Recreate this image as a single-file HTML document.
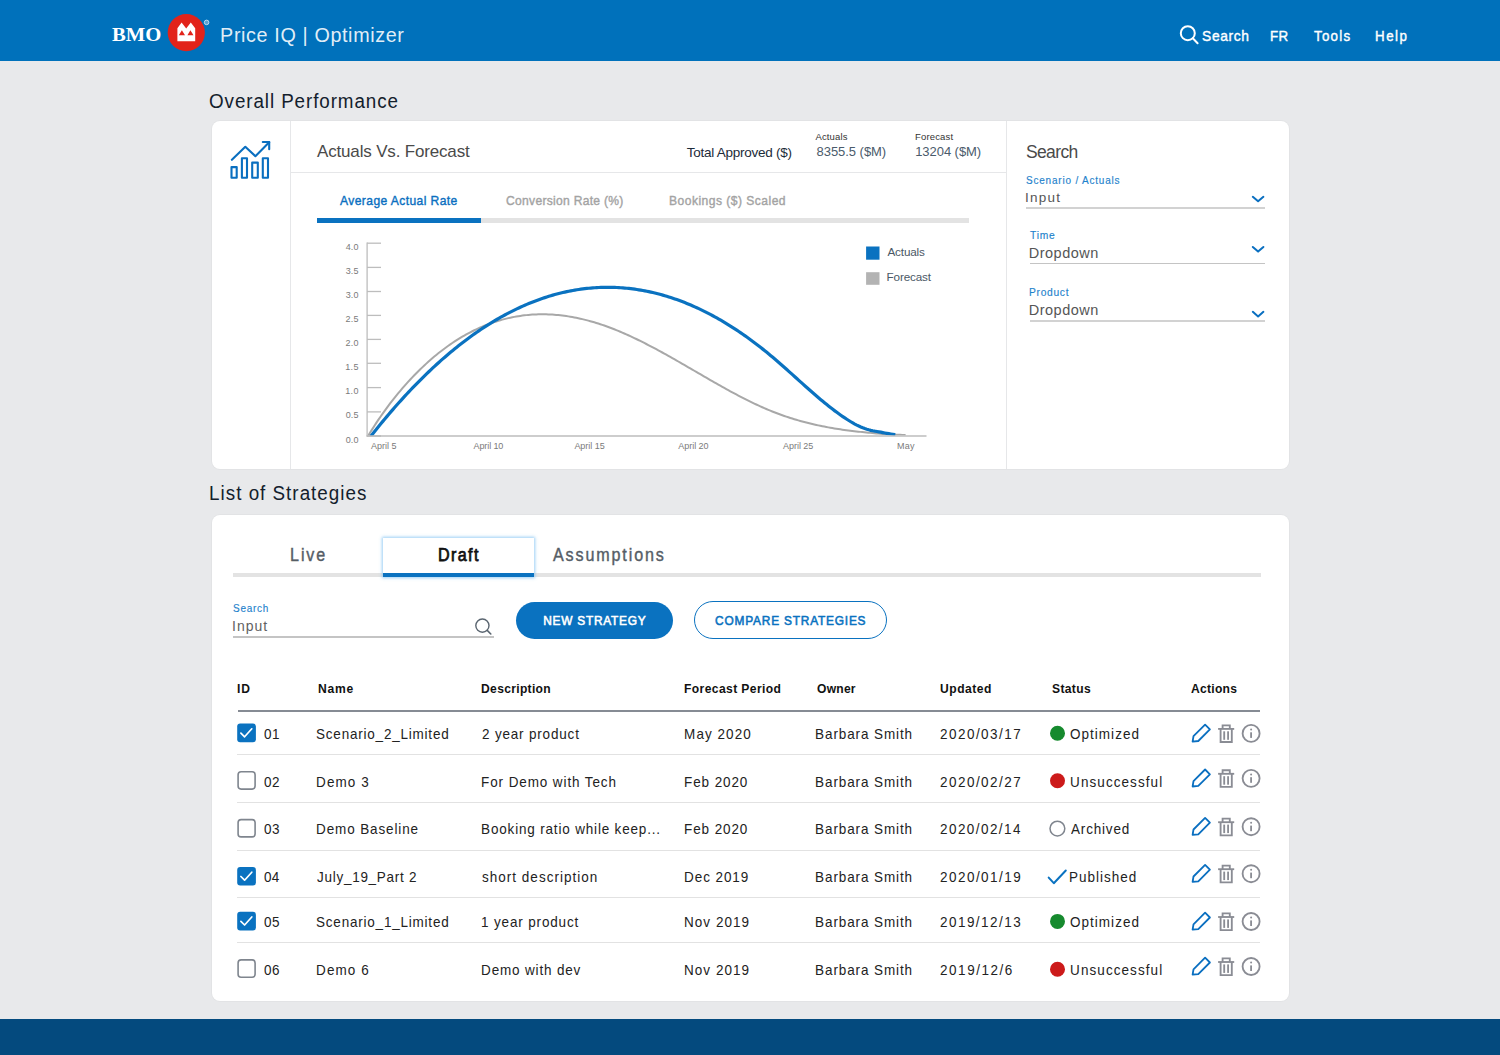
<!DOCTYPE html>
<html><head><meta charset="utf-8"><title>Price IQ | Optimizer</title>
<style>
html,body{margin:0;padding:0;}
body{width:1500px;height:1055px;overflow:hidden;position:relative;background:#E8E9EB;font-family:"Liberation Sans",sans-serif;}
.t{position:absolute;white-space:nowrap;}
.card{position:absolute;background:#fff;border-radius:8px;box-shadow:0 0 0 1px rgba(0,0,0,0.025);}
svg{overflow:visible}
</style></head><body>
<div style="position:absolute;left:0;top:0;width:1500px;height:61px;background:#0071BB"></div>
<svg style="position:absolute;left:0;top:0" width="260" height="61" viewBox="0 0 260 61">
<circle cx="186.3" cy="32.6" r="18.6" fill="#E2231A"/>
<path d="M177.4 41.2 V28.2 L181.6 22.6 L186.2 28.4 L190.8 22.6 L195.2 28.2 V41.2 Z" fill="#fff"/>
<path d="M178.8 35.2 L181.9 30.2 L185 35.2 Z M187.4 35.2 L190.4 30.2 L193.5 35.2 Z" fill="#E2231A"/>
<circle cx="206.6" cy="22.4" r="2.3" fill="rgba(255,255,255,0.35)" stroke="#dbe9f5" stroke-width="0.8"/>
</svg>
<svg style="position:absolute;left:1170px;top:15px" width="40" height="40" viewBox="1170 15 40 40">
<circle cx="1187.8" cy="33.2" r="7" fill="none" stroke="#fff" stroke-width="2"/>
<line x1="1192.8" y1="38.3" x2="1197.6" y2="43.2" stroke="#fff" stroke-width="2" stroke-linecap="round"/>
</svg>
<div style="position:absolute;left:0;top:1018.6px;width:1500px;height:40px;background:#044A7E"></div>
<div class="card" style="left:211.5px;top:121px;width:1077px;height:347.5px"></div>
<div style="position:absolute;left:290px;top:121px;width:1px;height:348px;background:#E6E7E9"></div>
<div style="position:absolute;left:1006px;top:121px;width:1px;height:348px;background:#E6E7E9"></div>
<div style="position:absolute;left:291px;top:172px;width:715px;height:1px;background:#E6E7E9"></div>
<svg style="position:absolute;left:220px;top:130px" width="60" height="60" viewBox="220 130 60 60">
<g fill="none" stroke="#0A6FC0" stroke-width="2.1" stroke-linejoin="round" stroke-linecap="round">
<rect x="231.5" y="167.1" width="5.2" height="10.7"/>
<rect x="241.9" y="158.2" width="5.1" height="19.6"/>
<rect x="252.2" y="162.6" width="5.6" height="15.2"/>
<rect x="262.8" y="158.2" width="5.2" height="19.6"/>
<polyline points="231.9,159.8 245.3,146.8 255.4,156.2 269.2,142.2"/>
<polyline points="262.8,142 269.2,142 269.2,149.3"/>
</g></svg>
<div style="position:absolute;left:317px;top:218px;width:652px;height:4.5px;background:#E3E3E3"></div>
<div style="position:absolute;left:317px;top:218px;width:164px;height:4.5px;background:#0A72C0"></div>
<div style="position:absolute;left:1026px;top:207.2px;width:239px;height:2px;background:#D2D2D2"></div>
<div style="position:absolute;left:1030px;top:262.8px;width:235px;height:1.5px;background:#C4C4C4"></div>
<div style="position:absolute;left:1030px;top:320.3px;width:235px;height:2px;background:#D2D2D2"></div>
<svg style="position:absolute;left:1240px;top:185px" width="40" height="140" viewBox="1240 185 40 140">
<g fill="none" stroke="#0A6FC0" stroke-width="2" stroke-linecap="round" stroke-linejoin="round">
<polyline points="1252.8,196.8 1258.1,201.3 1263.4,196.8"/>
<polyline points="1252.8,247 1258.1,251.6 1263.4,247"/>
<polyline points="1252.8,311.8 1258.1,316.4 1263.4,311.8"/>
</g></svg>
<svg style="position:absolute;left:0;top:0" width="1000" height="470" viewBox="0 0 1000 470">
<g stroke="#BDBDBD" stroke-width="1.3" fill="none">
<line x1="367.1" y1="242.6" x2="367.1" y2="436.4"/>
<line x1="366.5" y1="436" x2="926.5" y2="436"/>
<line x1="367" y1="243.2" x2="381" y2="243.2"/><line x1="367" y1="267.4" x2="381" y2="267.4"/><line x1="367" y1="291.5" x2="381" y2="291.5"/><line x1="367" y1="315.4" x2="381" y2="315.4"/><line x1="367" y1="339.4" x2="381" y2="339.4"/><line x1="367" y1="363.3" x2="381" y2="363.3"/><line x1="367" y1="387.6" x2="381" y2="387.6"/><line x1="367" y1="411.9" x2="381" y2="411.9"/>
<line x1="367" y1="436" x2="381" y2="436" stroke-width="1.8"/>
</g>
<defs><clipPath id="plotclip"><rect x="367.5" y="200" width="600" height="235.2"/></clipPath></defs>
<g clip-path="url(#plotclip)">
<path d="M368.3 435.57 L370.3 432.30 L372.3 429.10 L374.3 425.97 L376.3 422.90 L378.3 419.91 L380.3 416.98 L382.3 414.11 L384.3 411.30 L386.3 408.55 L388.3 405.86 L390.3 403.22 L392.3 400.64 L394.3 398.11 L396.3 395.63 L398.3 393.19 L400.3 390.81 L402.3 388.47 L404.3 386.17 L406.3 383.92 L408.3 381.70 L410.3 379.53 L412.3 377.40 L414.3 375.31 L416.3 373.26 L418.3 371.26 L420.3 369.29 L422.3 367.36 L424.3 365.47 L426.3 363.62 L428.3 361.81 L430.3 360.04 L432.3 358.30 L434.3 356.61 L436.3 354.95 L438.3 353.33 L440.3 351.75 L442.3 350.20 L444.3 348.69 L446.3 347.22 L448.3 345.78 L450.3 344.38 L452.3 343.02 L454.3 341.69 L456.3 340.39 L458.3 339.13 L460.3 337.91 L462.3 336.71 L464.3 335.56 L466.3 334.43 L468.3 333.34 L470.3 332.28 L472.3 331.26 L474.3 330.27 L476.3 329.31 L478.3 328.38 L480.3 327.48 L482.3 326.62 L484.3 325.79 L486.3 324.98 L488.3 324.21 L490.3 323.47 L492.3 322.76 L494.3 322.08 L496.3 321.43 L498.3 320.81 L500.3 320.22 L502.3 319.65 L504.3 319.12 L506.3 318.62 L508.3 318.14 L510.3 317.70 L512.3 317.28 L514.3 316.89 L516.3 316.53 L518.3 316.19 L520.3 315.89 L522.3 315.61 L524.3 315.36 L526.3 315.13 L528.3 314.94 L530.3 314.77 L532.3 314.62 L534.3 314.51 L536.3 314.41 L538.3 314.35 L540.3 314.31 L542.3 314.30 L544.3 314.31 L546.3 314.35 L548.3 314.41 L550.3 314.50 L552.3 314.61 L554.3 314.74 L556.3 314.90 L558.3 315.09 L560.3 315.30 L562.3 315.53 L564.3 315.79 L566.3 316.07 L568.3 316.37 L570.3 316.69 L572.3 317.04 L574.3 317.41 L576.3 317.81 L578.3 318.22 L580.3 318.66 L582.3 319.12 L584.3 319.60 L586.3 320.11 L588.3 320.63 L590.3 321.18 L592.3 321.74 L594.3 322.33 L596.3 322.94 L598.3 323.56 L600.3 324.21 L602.3 324.88 L604.3 325.57 L606.3 326.28 L608.3 327.00 L610.3 327.75 L612.3 328.52 L614.3 329.30 L616.3 330.10 L618.3 330.92 L620.3 331.76 L622.3 332.61 L624.3 333.48 L626.3 334.36 L628.3 335.26 L630.3 336.18 L632.3 337.11 L634.3 338.05 L636.3 339.01 L638.3 339.98 L640.3 340.97 L642.3 341.96 L644.3 342.97 L646.3 343.99 L648.3 345.02 L650.3 346.06 L652.3 347.11 L654.3 348.17 L656.3 349.24 L658.3 350.32 L660.3 351.41 L662.3 352.50 L664.3 353.61 L666.3 354.72 L668.3 355.83 L670.3 356.96 L672.3 358.08 L674.3 359.22 L676.3 360.35 L678.3 361.50 L680.3 362.64 L682.3 363.79 L684.3 364.95 L686.3 366.10 L688.3 367.26 L690.3 368.42 L692.3 369.58 L694.3 370.75 L696.3 371.91 L698.3 373.07 L700.3 374.23 L702.3 375.40 L704.3 376.55 L706.3 377.71 L708.3 378.87 L710.3 380.02 L712.3 381.17 L714.3 382.31 L716.3 383.45 L718.3 384.59 L720.3 385.72 L722.3 386.84 L724.3 387.96 L726.3 389.07 L728.3 390.17 L730.3 391.27 L732.3 392.35 L734.3 393.43 L736.3 394.49 L738.3 395.55 L740.3 396.60 L742.3 397.63 L744.3 398.66 L746.3 399.67 L748.3 400.67 L750.3 401.65 L752.3 402.62 L754.3 403.58 L756.3 404.52 L758.3 405.45 L760.3 406.36 L762.3 407.26 L764.3 408.14 L766.3 409.00 L768.3 409.84 L770.3 410.67 L772.3 411.48 L774.3 412.27 L776.3 413.04 L778.3 413.79 L780.3 414.52 L782.3 415.24 L784.3 415.94 L786.3 416.62 L788.3 417.28 L790.3 417.93 L792.3 418.56 L794.3 419.17 L796.3 419.77 L798.3 420.36 L800.3 420.92 L802.3 421.47 L804.3 422.01 L806.3 422.53 L808.3 423.04 L810.3 423.53 L812.3 424.01 L814.3 424.47 L816.3 424.92 L818.3 425.36 L820.3 425.79 L822.3 426.20 L824.3 426.60 L826.3 426.98 L828.3 427.36 L830.3 427.72 L832.3 428.07 L834.3 428.41 L836.3 428.73 L838.3 429.05 L840.3 429.36 L842.3 429.65 L844.3 429.94 L846.3 430.21 L848.3 430.48 L850.3 430.73 L852.3 430.98 L854.3 431.22 L856.3 431.45 L858.3 431.67 L860.3 431.88 L862.3 432.08 L864.3 432.28 L866.3 432.47 L868.3 432.66 L870.3 432.85 L872.3 433.04 L874.3 433.22 L876.3 433.40 L878.3 433.58 L880.3 433.75 L882.3 433.91 L884.3 434.05 L886.3 434.19 L888.3 434.32 L890.3 434.44 L892.3 434.54 L894.3 434.64 L896.3 434.72 L898.3 434.80 L900.3 434.87 L902.3 434.93 L904.3 434.98 L905.6 435.00" fill="none" stroke="#A8A8A8" stroke-width="2"/>
<path d="M370.8 436.27 L372.8 433.73 L374.8 431.22 L376.8 428.73 L378.8 426.26 L380.8 423.81 L382.8 421.38 L384.8 418.98 L386.8 416.60 L388.8 414.24 L390.8 411.90 L392.8 409.59 L394.8 407.30 L396.8 405.03 L398.8 402.78 L400.8 400.56 L402.8 398.35 L404.8 396.17 L406.8 394.01 L408.8 391.87 L410.8 389.76 L412.8 387.67 L414.8 385.60 L416.8 383.55 L418.8 381.52 L420.8 379.52 L422.8 377.53 L424.8 375.57 L426.8 373.63 L428.8 371.72 L430.8 369.82 L432.8 367.95 L434.8 366.10 L436.8 364.27 L438.8 362.46 L440.8 360.67 L442.8 358.91 L444.8 357.17 L446.8 355.45 L448.8 353.75 L450.8 352.07 L452.8 350.42 L454.8 348.79 L456.8 347.18 L458.8 345.59 L460.8 344.02 L462.8 342.47 L464.8 340.95 L466.8 339.45 L468.8 337.97 L470.8 336.51 L472.8 335.07 L474.8 333.65 L476.8 332.26 L478.8 330.89 L480.8 329.53 L482.8 328.20 L484.8 326.90 L486.8 325.61 L488.8 324.35 L490.8 323.10 L492.8 321.88 L494.8 320.68 L496.8 319.50 L498.8 318.34 L500.8 317.21 L502.8 316.09 L504.8 315.00 L506.8 313.93 L508.8 312.88 L510.8 311.85 L512.8 310.84 L514.8 309.85 L516.8 308.89 L518.8 307.94 L520.8 307.02 L522.8 306.12 L524.8 305.24 L526.8 304.38 L528.8 303.54 L530.8 302.73 L532.8 301.93 L534.8 301.16 L536.8 300.41 L538.8 299.68 L540.8 298.97 L542.8 298.28 L544.8 297.61 L546.8 296.96 L548.8 296.34 L550.8 295.73 L552.8 295.15 L554.8 294.58 L556.8 294.04 L558.8 293.52 L560.8 293.02 L562.8 292.55 L564.8 292.09 L566.8 291.65 L568.8 291.24 L570.8 290.84 L572.8 290.47 L574.8 290.12 L576.8 289.78 L578.8 289.47 L580.8 289.18 L582.8 288.91 L584.8 288.67 L586.8 288.44 L588.8 288.23 L590.8 288.05 L592.8 287.88 L594.8 287.74 L596.8 287.61 L598.8 287.51 L600.8 287.43 L602.8 287.37 L604.8 287.33 L606.8 287.31 L608.8 287.31 L610.8 287.33 L612.8 287.37 L614.8 287.43 L616.8 287.52 L618.8 287.62 L620.8 287.75 L622.8 287.89 L624.8 288.06 L626.8 288.24 L628.8 288.45 L630.8 288.68 L632.8 288.93 L634.8 289.20 L636.8 289.49 L638.8 289.80 L640.8 290.13 L642.8 290.48 L644.8 290.85 L646.8 291.24 L648.8 291.66 L650.8 292.09 L652.8 292.55 L654.8 293.02 L656.8 293.52 L658.8 294.03 L660.8 294.57 L662.8 295.13 L664.8 295.71 L666.8 296.30 L668.8 296.92 L670.8 297.56 L672.8 298.22 L674.8 298.90 L676.8 299.60 L678.8 300.33 L680.8 301.07 L682.8 301.83 L684.8 302.61 L686.8 303.42 L688.8 304.24 L690.8 305.09 L692.8 305.95 L694.8 306.84 L696.8 307.74 L698.8 308.67 L700.8 309.62 L702.8 310.59 L704.8 311.57 L706.8 312.58 L708.8 313.61 L710.8 314.66 L712.8 315.73 L714.8 316.82 L716.8 317.93 L718.8 319.07 L720.8 320.22 L722.8 321.39 L724.8 322.58 L726.8 323.80 L728.8 325.03 L730.8 326.28 L732.8 327.56 L734.8 328.85 L736.8 330.17 L738.8 331.50 L740.8 332.86 L742.8 334.24 L744.8 335.63 L746.8 337.05 L748.8 338.49 L750.8 339.95 L752.8 341.43 L754.8 342.92 L756.8 344.44 L758.8 345.98 L760.8 347.54 L762.8 349.12 L764.8 350.72 L766.8 352.35 L768.8 353.99 L770.8 355.65 L772.8 357.33 L774.8 359.03 L776.8 360.75 L778.8 362.48 L780.8 364.23 L782.8 365.99 L784.8 367.76 L786.8 369.54 L788.8 371.33 L790.8 373.13 L792.8 374.93 L794.8 376.73 L796.8 378.53 L798.8 380.33 L800.8 382.13 L802.8 383.93 L804.8 385.72 L806.8 387.50 L808.8 389.28 L810.8 391.05 L812.8 392.80 L814.8 394.54 L816.8 396.27 L818.8 397.97 L820.8 399.67 L822.8 401.34 L824.8 402.99 L826.8 404.61 L828.8 406.21 L830.8 407.79 L832.8 409.34 L834.8 410.85 L836.8 412.34 L838.8 413.79 L840.8 415.21 L842.8 416.60 L844.8 417.94 L846.8 419.25 L848.8 420.51 L850.8 421.74 L852.8 422.91 L854.8 424.05 L856.8 425.09 L858.8 426.06 L860.8 426.96 L862.8 427.79 L864.8 428.55 L866.8 429.21 L868.8 429.80 L870.8 430.32 L872.8 430.77 L874.8 431.17 L876.8 431.52 L878.8 431.84 L880.8 432.16 L882.8 432.57 L884.8 432.95 L886.8 433.32 L888.8 433.66 L890.8 433.98 L892.8 434.27 L894.8 434.54 L895.3 434.60" fill="none" stroke="#0A72C0" stroke-width="3.2"/>
</g>
<rect x="866.1" y="246.5" width="13.4" height="13.2" fill="#0A72C0"/>
<rect x="866.1" y="272.2" width="13.4" height="12.6" fill="#B3B3B3"/>
</svg>
<div class="card" style="left:211.5px;top:514.8px;width:1077px;height:486.3px"></div>
<div style="position:absolute;left:233px;top:572.6px;width:1028px;height:4.3px;background:#E3E3E3"></div>
<div style="position:absolute;left:383.3px;top:538px;width:150.4px;height:38.8px;box-shadow:0 0 3px 1px rgba(110,185,240,0.7);background:#fff"></div>
<div style="position:absolute;left:383.3px;top:572.6px;width:150.4px;height:4.3px;background:#0A72C0"></div>
<div style="position:absolute;left:233px;top:636.4px;width:261px;height:1.3px;background:#C4C4C4"></div>
<svg style="position:absolute;left:470px;top:612px" width="30" height="30" viewBox="470 612 30 30">
<circle cx="482.4" cy="625.6" r="6.6" fill="none" stroke="#5A6570" stroke-width="1.4"/>
<line x1="487.2" y1="630.4" x2="490.8" y2="634" stroke="#5A6570" stroke-width="1.6" stroke-linecap="round"/>
</svg>
<div style="position:absolute;left:515.7px;top:602px;width:157.8px;height:36.5px;border-radius:19px;background:#0A72C0"></div>
<div style="position:absolute;left:693.5px;top:601.2px;width:193.4px;height:38.1px;border-radius:20px;border:1.6px solid #0A72C0;box-sizing:border-box"></div>
<div style="position:absolute;left:237.7px;top:710.2px;width:1022.7px;height:1.8px;background:#868B94"></div>
<div style="position:absolute;left:237px;top:753.6px;width:1023.4px;height:1.2px;background:#E2E2E2"></div>
<div style="position:absolute;left:237px;top:801.7px;width:1023.4px;height:1.2px;background:#E2E2E2"></div>
<div style="position:absolute;left:237px;top:849.5px;width:1023.4px;height:1.2px;background:#E2E2E2"></div>
<div style="position:absolute;left:237px;top:897.0px;width:1023.4px;height:1.2px;background:#E2E2E2"></div>
<div style="position:absolute;left:237px;top:941.8px;width:1023.4px;height:1.2px;background:#E2E2E2"></div>
<svg style="position:absolute;left:0;top:0" width="1500" height="1055" viewBox="0 0 1500 1055"><rect x="237.2" y="723.5" width="18.7" height="18.7" rx="3" fill="#0A72C0"/><polyline points="240.9,733.1 244.6,736.8 251.8,728.8" fill="none" stroke="#fff" stroke-width="1.7" stroke-linecap="round" stroke-linejoin="round"/><circle cx="1057.5" cy="733.2" r="7.5" fill="#168A2E"/><g transform="translate(0 0.0)"><path d="M1192.6 741.6 L1193.5 736.2 L1205.1 724.6 L1209.9 729.4 L1198.3 741 Z" fill="none" stroke="#0A6FC0" stroke-width="1.8" stroke-linejoin="round"/><g fill="none" stroke="#8A8C94" stroke-width="1.85"><line x1="1218.1" y1="728.9" x2="1234.2" y2="728.9"/><path d="M1222.6 728.9 V725.3 H1229.8 V728.9"/><path d="M1220.6 728.9 V742 H1231.8 V728.9"/><line x1="1224.2" y1="731.3" x2="1224.2" y2="739.8"/><line x1="1228.1" y1="731.3" x2="1228.1" y2="739.8"/><circle cx="1251.1" cy="733.4" r="8.5"/><line x1="1251.1" y1="732.3" x2="1251.1" y2="737.9"/></g><circle cx="1251.1" cy="729.5" r="1" fill="#8A8C94"/></g><rect x="238.1" y="771.8" width="17" height="17.3" rx="3" fill="none" stroke="#7F858E" stroke-width="1.6"/><circle cx="1057.5" cy="780.8" r="7.5" fill="#CC1A1A"/><g transform="translate(0 44.9)"><path d="M1192.6 741.6 L1193.5 736.2 L1205.1 724.6 L1209.9 729.4 L1198.3 741 Z" fill="none" stroke="#0A6FC0" stroke-width="1.8" stroke-linejoin="round"/><g fill="none" stroke="#8A8C94" stroke-width="1.85"><line x1="1218.1" y1="728.9" x2="1234.2" y2="728.9"/><path d="M1222.6 728.9 V725.3 H1229.8 V728.9"/><path d="M1220.6 728.9 V742 H1231.8 V728.9"/><line x1="1224.2" y1="731.3" x2="1224.2" y2="739.8"/><line x1="1228.1" y1="731.3" x2="1228.1" y2="739.8"/><circle cx="1251.1" cy="733.4" r="8.5"/><line x1="1251.1" y1="732.3" x2="1251.1" y2="737.9"/></g><circle cx="1251.1" cy="729.5" r="1" fill="#8A8C94"/></g><rect x="238.1" y="819.6" width="17" height="17.3" rx="3" fill="none" stroke="#7F858E" stroke-width="1.6"/><circle cx="1057.4" cy="828.6" r="7.4" fill="none" stroke="#7F858E" stroke-width="1.5"/><g transform="translate(0 93.3)"><path d="M1192.6 741.6 L1193.5 736.2 L1205.1 724.6 L1209.9 729.4 L1198.3 741 Z" fill="none" stroke="#0A6FC0" stroke-width="1.8" stroke-linejoin="round"/><g fill="none" stroke="#8A8C94" stroke-width="1.85"><line x1="1218.1" y1="728.9" x2="1234.2" y2="728.9"/><path d="M1222.6 728.9 V725.3 H1229.8 V728.9"/><path d="M1220.6 728.9 V742 H1231.8 V728.9"/><line x1="1224.2" y1="731.3" x2="1224.2" y2="739.8"/><line x1="1228.1" y1="731.3" x2="1228.1" y2="739.8"/><circle cx="1251.1" cy="733.4" r="8.5"/><line x1="1251.1" y1="732.3" x2="1251.1" y2="737.9"/></g><circle cx="1251.1" cy="729.5" r="1" fill="#8A8C94"/></g><rect x="237.2" y="866.9" width="18.7" height="18.7" rx="3" fill="#0A72C0"/><polyline points="240.9,876.5 244.6,880.2 251.8,872.2" fill="none" stroke="#fff" stroke-width="1.7" stroke-linecap="round" stroke-linejoin="round"/><polyline points="1048.7,877.6 1053.8,883.2 1065.8,870.5" fill="none" stroke="#0A72C0" stroke-width="2" stroke-linecap="round" stroke-linejoin="round"/><g transform="translate(0 140.3)"><path d="M1192.6 741.6 L1193.5 736.2 L1205.1 724.6 L1209.9 729.4 L1198.3 741 Z" fill="none" stroke="#0A6FC0" stroke-width="1.8" stroke-linejoin="round"/><g fill="none" stroke="#8A8C94" stroke-width="1.85"><line x1="1218.1" y1="728.9" x2="1234.2" y2="728.9"/><path d="M1222.6 728.9 V725.3 H1229.8 V728.9"/><path d="M1220.6 728.9 V742 H1231.8 V728.9"/><line x1="1224.2" y1="731.3" x2="1224.2" y2="739.8"/><line x1="1228.1" y1="731.3" x2="1228.1" y2="739.8"/><circle cx="1251.1" cy="733.4" r="8.5"/><line x1="1251.1" y1="732.3" x2="1251.1" y2="737.9"/></g><circle cx="1251.1" cy="729.5" r="1" fill="#8A8C94"/></g><rect x="237.2" y="911.7" width="18.7" height="18.7" rx="3" fill="#0A72C0"/><polyline points="240.9,921.3 244.6,925.0 251.8,917.0" fill="none" stroke="#fff" stroke-width="1.7" stroke-linecap="round" stroke-linejoin="round"/><circle cx="1057.5" cy="921.4" r="7.5" fill="#168A2E"/><g transform="translate(0 188.1)"><path d="M1192.6 741.6 L1193.5 736.2 L1205.1 724.6 L1209.9 729.4 L1198.3 741 Z" fill="none" stroke="#0A6FC0" stroke-width="1.8" stroke-linejoin="round"/><g fill="none" stroke="#8A8C94" stroke-width="1.85"><line x1="1218.1" y1="728.9" x2="1234.2" y2="728.9"/><path d="M1222.6 728.9 V725.3 H1229.8 V728.9"/><path d="M1220.6 728.9 V742 H1231.8 V728.9"/><line x1="1224.2" y1="731.3" x2="1224.2" y2="739.8"/><line x1="1228.1" y1="731.3" x2="1228.1" y2="739.8"/><circle cx="1251.1" cy="733.4" r="8.5"/><line x1="1251.1" y1="732.3" x2="1251.1" y2="737.9"/></g><circle cx="1251.1" cy="729.5" r="1" fill="#8A8C94"/></g><rect x="238.1" y="959.9" width="17" height="17.3" rx="3" fill="none" stroke="#7F858E" stroke-width="1.6"/><circle cx="1057.5" cy="969.2" r="7.5" fill="#CC1A1A"/><g transform="translate(0 233.1)"><path d="M1192.6 741.6 L1193.5 736.2 L1205.1 724.6 L1209.9 729.4 L1198.3 741 Z" fill="none" stroke="#0A6FC0" stroke-width="1.8" stroke-linejoin="round"/><g fill="none" stroke="#8A8C94" stroke-width="1.85"><line x1="1218.1" y1="728.9" x2="1234.2" y2="728.9"/><path d="M1222.6 728.9 V725.3 H1229.8 V728.9"/><path d="M1220.6 728.9 V742 H1231.8 V728.9"/><line x1="1224.2" y1="731.3" x2="1224.2" y2="739.8"/><line x1="1228.1" y1="731.3" x2="1228.1" y2="739.8"/><circle cx="1251.1" cy="733.4" r="8.5"/><line x1="1251.1" y1="732.3" x2="1251.1" y2="737.9"/></g><circle cx="1251.1" cy="729.5" r="1" fill="#8A8C94"/></g></svg>
<div class="t" style="left:111.70px;top:25px;font-size:19.5px;line-height:19.5px;color:#fff;font-weight:700;letter-spacing:0.000px;font-family:'Liberation Serif',serif;transform:scaleX(1.1);transform-origin:0.30px 0;transform:scaleX(1.0596);transform-origin:0.30px 0;">BMO</div>
<div class="t" style="left:220.00px;top:24px;font-size:21px;line-height:21px;color:rgba(255,255,255,0.9);font-weight:400;letter-spacing:0.669px;transform:scaleX(0.94);transform-origin:1.70px 0;">Price IQ | Optimizer</div>
<div class="t" style="left:1202.30px;top:28px;font-size:15px;line-height:15px;color:#fff;font-weight:400;letter-spacing:0.668px;transform:scaleX(0.92);transform-origin:0.70px 0;-webkit-text-stroke:0.4px currentColor;">Search</div>
<div class="t" style="left:1270.00px;top:29px;font-size:14.5px;line-height:14.5px;color:#fff;font-weight:400;letter-spacing:0.217px;transform:scaleX(0.92);transform-origin:1.20px 0;-webkit-text-stroke:0.4px currentColor;">FR</div>
<div class="t" style="left:1313.90px;top:29px;font-size:14.5px;line-height:14.5px;color:#fff;font-weight:400;letter-spacing:1.345px;transform:scaleX(0.92);transform-origin:0.30px 0;-webkit-text-stroke:0.4px currentColor;">Tools</div>
<div class="t" style="left:1374.50px;top:29px;font-size:14.5px;line-height:14.5px;color:#fff;font-weight:400;letter-spacing:1.575px;transform:scaleX(0.92);transform-origin:1.20px 0;-webkit-text-stroke:0.4px currentColor;">Help</div>
<div class="t" style="left:209.10px;top:91px;font-size:20px;line-height:20px;color:#13202C;font-weight:400;letter-spacing:0.975px;transform:scaleX(0.94);transform-origin:0.90px 0;">Overall Performance</div>
<div class="t" style="left:209.00px;top:483px;font-size:20px;line-height:20px;color:#13202C;font-weight:400;letter-spacing:1.076px;transform:scaleX(0.94);transform-origin:1.60px 0;">List of Strategies</div>
<div class="t" style="left:317.00px;top:143px;font-size:17px;line-height:17px;color:#4A4A4A;font-weight:400;letter-spacing:-0.168px;">Actuals Vs. Forecast</div>
<div class="t" style="left:686.70px;top:146px;font-size:13.5px;line-height:13.5px;color:#1C2B39;font-weight:400;letter-spacing:-0.253px;">Total Approved ($)</div>
<div class="t" style="left:815.40px;top:132px;font-size:9.5px;line-height:9.5px;color:#333;font-weight:400;letter-spacing:0.167px;">Actuals</div>
<div class="t" style="left:816.50px;top:145px;font-size:13px;line-height:13px;color:#4A5B6B;font-weight:400;letter-spacing:-0.040px;">8355.5 ($M)</div>
<div class="t" style="left:915.00px;top:132px;font-size:9.5px;line-height:9.5px;color:#333;font-weight:400;letter-spacing:0.157px;">Forecast</div>
<div class="t" style="left:915.20px;top:145px;font-size:13px;line-height:13px;color:#4A5B6B;font-weight:400;letter-spacing:-0.056px;">13204 ($M)</div>
<div class="t" style="left:340.40px;top:194px;font-size:13px;line-height:13px;color:#0A6FC0;font-weight:400;letter-spacing:0.433px;transform:scaleX(0.93);transform-origin:0.00px 0;-webkit-text-stroke:0.4px currentColor;">Average Actual Rate</div>
<div class="t" style="left:506.20px;top:194px;font-size:13px;line-height:13px;color:#A3A3A3;font-weight:400;letter-spacing:0.301px;transform:scaleX(0.93);transform-origin:0.60px 0;-webkit-text-stroke:0.4px currentColor;">Conversion Rate (%)</div>
<div class="t" style="left:668.90px;top:194px;font-size:13px;line-height:13px;color:#A3A3A3;font-weight:400;letter-spacing:0.497px;transform:scaleX(0.93);transform-origin:1.00px 0;-webkit-text-stroke:0.4px currentColor;">Bookings ($) Scaled</div>
<div class="t" style="left:1025.90px;top:144px;font-size:17.5px;line-height:17.5px;color:#4A4A4A;font-weight:400;letter-spacing:-0.600px;">Search</div>
<div class="t" style="left:1025.80px;top:175px;font-size:10.5px;line-height:10.5px;color:#1E82CC;font-weight:400;letter-spacing:0.846px;transform:scaleX(0.95);transform-origin:0.50px 0;-webkit-text-stroke:0.15px currentColor;">Scenario / Actuals</div>
<div class="t" style="left:1025.10px;top:191px;font-size:13.5px;line-height:13.5px;color:#555;font-weight:400;letter-spacing:1.200px;">Input</div>
<div class="t" style="left:1029.80px;top:230px;font-size:10.8px;line-height:10.8px;color:#1E82CC;font-weight:400;letter-spacing:0.789px;transform:scaleX(0.95);transform-origin:0.20px 0;-webkit-text-stroke:0.15px currentColor;">Time</div>
<div class="t" style="left:1028.80px;top:246px;font-size:14.5px;line-height:14.5px;color:#555;font-weight:400;letter-spacing:0.486px;">Dropdown</div>
<div class="t" style="left:1029.10px;top:287px;font-size:10.8px;line-height:10.8px;color:#1E82CC;font-weight:400;letter-spacing:0.721px;transform:scaleX(0.95);transform-origin:0.90px 0;-webkit-text-stroke:0.15px currentColor;">Product</div>
<div class="t" style="left:1028.80px;top:303px;font-size:14.5px;line-height:14.5px;color:#555;font-weight:400;letter-spacing:0.486px;">Dropdown</div>
<div class="t" style="left:887.40px;top:246px;font-size:11.7px;line-height:11.7px;color:#4A5866;font-weight:400;letter-spacing:-0.133px;">Actuals</div>
<div class="t" style="left:886.50px;top:271px;font-size:11.7px;line-height:11.7px;color:#4A5866;font-weight:400;letter-spacing:-0.129px;">Forecast</div>
<div class="t" style="left:345.80px;top:243px;font-size:9px;line-height:9px;color:#7A7A7A;font-weight:400;letter-spacing:0.050px;">4.0</div>
<div class="t" style="left:345.70px;top:267px;font-size:9px;line-height:9px;color:#7A7A7A;font-weight:400;letter-spacing:0.100px;">3.5</div>
<div class="t" style="left:345.70px;top:291px;font-size:9px;line-height:9px;color:#7A7A7A;font-weight:400;letter-spacing:0.100px;">3.0</div>
<div class="t" style="left:345.60px;top:315px;font-size:9px;line-height:9px;color:#7A7A7A;font-weight:400;letter-spacing:0.150px;">2.5</div>
<div class="t" style="left:345.60px;top:339px;font-size:9px;line-height:9px;color:#7A7A7A;font-weight:400;letter-spacing:0.150px;">2.0</div>
<div class="t" style="left:345.30px;top:363px;font-size:9px;line-height:9px;color:#7A7A7A;font-weight:400;letter-spacing:0.300px;">1.5</div>
<div class="t" style="left:345.30px;top:387px;font-size:9px;line-height:9px;color:#7A7A7A;font-weight:400;letter-spacing:0.300px;">1.0</div>
<div class="t" style="left:345.70px;top:411px;font-size:9px;line-height:9px;color:#7A7A7A;font-weight:400;letter-spacing:0.100px;">0.5</div>
<div class="t" style="left:345.70px;top:436px;font-size:9px;line-height:9px;color:#7A7A7A;font-weight:400;letter-spacing:0.100px;">0.0</div>
<div class="t" style="left:371.00px;top:442px;font-size:9px;line-height:9px;color:#7A7A7A;font-weight:400;letter-spacing:-0.017px;">April 5</div>
<div class="t" style="left:473.60px;top:442px;font-size:9px;line-height:9px;color:#7A7A7A;font-weight:400;letter-spacing:-0.114px;">April 10</div>
<div class="t" style="left:574.40px;top:442px;font-size:9px;line-height:9px;color:#7A7A7A;font-weight:400;letter-spacing:-0.029px;">April 15</div>
<div class="t" style="left:678.20px;top:442px;font-size:9px;line-height:9px;color:#7A7A7A;font-weight:400;letter-spacing:-0.014px;">April 20</div>
<div class="t" style="left:783.00px;top:442px;font-size:9px;line-height:9px;color:#7A7A7A;font-weight:400;letter-spacing:-0.029px;">April 25</div>
<div class="t" style="left:897.10px;top:442px;font-size:9px;line-height:9px;color:#7A7A7A;font-weight:400;letter-spacing:0.200px;">May</div>
<div class="t" style="left:289.70px;top:547px;font-size:17.5px;line-height:17.5px;color:#555D66;font-weight:400;letter-spacing:1.993px;transform:scaleX(0.92);transform-origin:1.40px 0;-webkit-text-stroke:0.4px currentColor;">Live</div>
<div class="t" style="left:438.00px;top:547px;font-size:17.5px;line-height:17.5px;color:#111;font-weight:400;letter-spacing:1.473px;transform:scaleX(0.92);transform-origin:1.40px 0;-webkit-text-stroke:0.75px currentColor;">Draft</div>
<div class="t" style="left:553.00px;top:547px;font-size:17.5px;line-height:17.5px;color:#555D66;font-weight:400;letter-spacing:2.028px;transform:scaleX(0.92);transform-origin:0.00px 0;-webkit-text-stroke:0.4px currentColor;">Assumptions</div>
<div class="t" style="left:232.90px;top:603px;font-size:10.5px;line-height:10.5px;color:#1E82CC;font-weight:400;letter-spacing:0.780px;transform:scaleX(0.95);transform-origin:0.50px 0;-webkit-text-stroke:0.15px currentColor;">Search</div>
<div class="t" style="left:232.10px;top:619px;font-size:14px;line-height:14px;color:#616161;font-weight:400;letter-spacing:0.975px;">Input</div>
<div class="t" style="left:542.60px;top:614px;font-size:13.5px;line-height:13.5px;color:#fff;font-weight:400;letter-spacing:0.865px;transform:scaleX(0.88);transform-origin:1.10px 0;-webkit-text-stroke:0.6px currentColor;">NEW STRATEGY</div>
<div class="t" style="left:715.00px;top:614px;font-size:13.5px;line-height:13.5px;color:#0A72C0;font-weight:400;letter-spacing:0.909px;transform:scaleX(0.88);transform-origin:0.70px 0;-webkit-text-stroke:0.6px currentColor;">COMPARE STRATEGIES</div>
<div class="t" style="left:236.90px;top:682px;font-size:13px;line-height:13px;color:#111;font-weight:700;letter-spacing:0.881px;transform:scaleX(0.93);transform-origin:0.80px 0;">ID</div>
<div class="t" style="left:317.60px;top:682px;font-size:13px;line-height:13px;color:#111;font-weight:700;letter-spacing:0.822px;transform:scaleX(0.93);transform-origin:0.80px 0;">Name</div>
<div class="t" style="left:481.10px;top:682px;font-size:13px;line-height:13px;color:#111;font-weight:700;letter-spacing:0.333px;transform:scaleX(0.93);transform-origin:0.80px 0;">Description</div>
<div class="t" style="left:684.00px;top:682px;font-size:13px;line-height:13px;color:#111;font-weight:700;letter-spacing:0.420px;transform:scaleX(0.93);transform-origin:0.80px 0;">Forecast Period</div>
<div class="t" style="left:817.00px;top:682px;font-size:13px;line-height:13px;color:#111;font-weight:700;letter-spacing:0.238px;transform:scaleX(0.93);transform-origin:0.50px 0;">Owner</div>
<div class="t" style="left:939.50px;top:682px;font-size:13px;line-height:13px;color:#111;font-weight:700;letter-spacing:0.543px;transform:scaleX(0.93);transform-origin:0.80px 0;">Updated</div>
<div class="t" style="left:1051.60px;top:682px;font-size:13px;line-height:13px;color:#111;font-weight:700;letter-spacing:0.369px;transform:scaleX(0.93);transform-origin:0.40px 0;">Status</div>
<div class="t" style="left:1191.20px;top:682px;font-size:13px;line-height:13px;color:#111;font-weight:700;letter-spacing:0.282px;transform:scaleX(0.93);transform-origin:0.30px 0;">Actions</div>
<div class="t" style="left:263.90px;top:727px;font-size:14.5px;line-height:14.5px;color:#222;font-weight:400;letter-spacing:0.484px;transform:scaleX(0.93);transform-origin:0.50px 0;">01</div>
<div class="t" style="left:316.00px;top:727px;font-size:14.5px;line-height:14.5px;color:#222;font-weight:400;letter-spacing:0.851px;transform:scaleX(0.93);transform-origin:0.70px 0;">Scenario_2_Limited</div>
<div class="t" style="left:481.50px;top:727px;font-size:14.5px;line-height:14.5px;color:#222;font-weight:400;letter-spacing:0.879px;transform:scaleX(0.93);transform-origin:0.70px 0;">2 year product</div>
<div class="t" style="left:683.80px;top:727px;font-size:14.5px;line-height:14.5px;color:#222;font-weight:400;letter-spacing:1.142px;transform:scaleX(0.93);transform-origin:1.20px 0;">May 2020</div>
<div class="t" style="left:814.50px;top:727px;font-size:14.5px;line-height:14.5px;color:#222;font-weight:400;letter-spacing:0.971px;transform:scaleX(0.93);transform-origin:1.20px 0;">Barbara Smith</div>
<div class="t" style="left:939.70px;top:727px;font-size:14.5px;line-height:14.5px;color:#222;font-weight:400;letter-spacing:1.575px;transform:scaleX(0.93);transform-origin:0.70px 0;">2020/03/17</div>
<div class="t" style="left:1069.90px;top:727px;font-size:14.5px;line-height:14.5px;color:#222;font-weight:400;letter-spacing:1.097px;transform:scaleX(0.93);transform-origin:0.70px 0;">Optimized</div>
<div class="t" style="left:263.90px;top:775px;font-size:14.5px;line-height:14.5px;color:#222;font-weight:400;letter-spacing:0.484px;transform:scaleX(0.93);transform-origin:0.50px 0;">02</div>
<div class="t" style="left:315.50px;top:775px;font-size:14.5px;line-height:14.5px;color:#222;font-weight:400;letter-spacing:1.146px;transform:scaleX(0.93);transform-origin:1.20px 0;">Demo 3</div>
<div class="t" style="left:481.00px;top:775px;font-size:14.5px;line-height:14.5px;color:#222;font-weight:400;letter-spacing:0.965px;transform:scaleX(0.93);transform-origin:1.20px 0;">For Demo with Tech</div>
<div class="t" style="left:683.80px;top:775px;font-size:14.5px;line-height:14.5px;color:#222;font-weight:400;letter-spacing:0.962px;transform:scaleX(0.93);transform-origin:1.20px 0;">Feb 2020</div>
<div class="t" style="left:814.50px;top:775px;font-size:14.5px;line-height:14.5px;color:#222;font-weight:400;letter-spacing:0.971px;transform:scaleX(0.93);transform-origin:1.20px 0;">Barbara Smith</div>
<div class="t" style="left:939.70px;top:775px;font-size:14.5px;line-height:14.5px;color:#222;font-weight:400;letter-spacing:1.575px;transform:scaleX(0.93);transform-origin:0.70px 0;">2020/02/27</div>
<div class="t" style="left:1069.50px;top:775px;font-size:14.5px;line-height:14.5px;color:#222;font-weight:400;letter-spacing:1.163px;transform:scaleX(0.93);transform-origin:1.10px 0;">Unsuccessful</div>
<div class="t" style="left:263.90px;top:822px;font-size:14.5px;line-height:14.5px;color:#222;font-weight:400;letter-spacing:0.384px;transform:scaleX(0.93);transform-origin:0.50px 0;">03</div>
<div class="t" style="left:315.50px;top:822px;font-size:14.5px;line-height:14.5px;color:#222;font-weight:400;letter-spacing:0.946px;transform:scaleX(0.93);transform-origin:1.20px 0;">Demo Baseline</div>
<div class="t" style="left:481.00px;top:822px;font-size:14.5px;line-height:14.5px;color:#222;font-weight:400;letter-spacing:0.892px;transform:scaleX(0.93);transform-origin:1.20px 0;">Booking ratio while keep...</div>
<div class="t" style="left:683.80px;top:822px;font-size:14.5px;line-height:14.5px;color:#222;font-weight:400;letter-spacing:0.962px;transform:scaleX(0.93);transform-origin:1.20px 0;">Feb 2020</div>
<div class="t" style="left:814.50px;top:822px;font-size:14.5px;line-height:14.5px;color:#222;font-weight:400;letter-spacing:0.971px;transform:scaleX(0.93);transform-origin:1.20px 0;">Barbara Smith</div>
<div class="t" style="left:939.70px;top:822px;font-size:14.5px;line-height:14.5px;color:#222;font-weight:400;letter-spacing:1.542px;transform:scaleX(0.93);transform-origin:0.70px 0;">2020/02/14</div>
<div class="t" style="left:1070.60px;top:822px;font-size:14.5px;line-height:14.5px;color:#222;font-weight:400;letter-spacing:0.890px;transform:scaleX(0.93);transform-origin:0.00px 0;">Archived</div>
<div class="t" style="left:263.90px;top:870px;font-size:14.5px;line-height:14.5px;color:#222;font-weight:400;letter-spacing:0.184px;transform:scaleX(0.93);transform-origin:0.50px 0;">04</div>
<div class="t" style="left:316.50px;top:870px;font-size:14.5px;line-height:14.5px;color:#222;font-weight:400;letter-spacing:0.787px;transform:scaleX(0.93);transform-origin:0.20px 0;">July_19_Part 2</div>
<div class="t" style="left:481.80px;top:870px;font-size:14.5px;line-height:14.5px;color:#222;font-weight:400;letter-spacing:1.092px;transform:scaleX(0.93);transform-origin:0.40px 0;">short description</div>
<div class="t" style="left:683.80px;top:870px;font-size:14.5px;line-height:14.5px;color:#222;font-weight:400;letter-spacing:0.985px;transform:scaleX(0.93);transform-origin:1.20px 0;">Dec 2019</div>
<div class="t" style="left:814.50px;top:870px;font-size:14.5px;line-height:14.5px;color:#222;font-weight:400;letter-spacing:0.971px;transform:scaleX(0.93);transform-origin:1.20px 0;">Barbara Smith</div>
<div class="t" style="left:939.70px;top:870px;font-size:14.5px;line-height:14.5px;color:#222;font-weight:400;letter-spacing:1.575px;transform:scaleX(0.93);transform-origin:0.70px 0;">2020/01/19</div>
<div class="t" style="left:1069.40px;top:870px;font-size:14.5px;line-height:14.5px;color:#222;font-weight:400;letter-spacing:1.077px;transform:scaleX(0.93);transform-origin:1.20px 0;">Published</div>
<div class="t" style="left:263.90px;top:915px;font-size:14.5px;line-height:14.5px;color:#222;font-weight:400;letter-spacing:0.384px;transform:scaleX(0.93);transform-origin:0.50px 0;">05</div>
<div class="t" style="left:316.00px;top:915px;font-size:14.5px;line-height:14.5px;color:#222;font-weight:400;letter-spacing:0.851px;transform:scaleX(0.93);transform-origin:0.70px 0;">Scenario_1_Limited</div>
<div class="t" style="left:481.10px;top:915px;font-size:14.5px;line-height:14.5px;color:#222;font-weight:400;letter-spacing:0.910px;transform:scaleX(0.93);transform-origin:1.10px 0;">1 year product</div>
<div class="t" style="left:683.80px;top:915px;font-size:14.5px;line-height:14.5px;color:#222;font-weight:400;letter-spacing:1.093px;transform:scaleX(0.93);transform-origin:1.20px 0;">Nov 2019</div>
<div class="t" style="left:814.50px;top:915px;font-size:14.5px;line-height:14.5px;color:#222;font-weight:400;letter-spacing:0.971px;transform:scaleX(0.93);transform-origin:1.20px 0;">Barbara Smith</div>
<div class="t" style="left:939.70px;top:915px;font-size:14.5px;line-height:14.5px;color:#222;font-weight:400;letter-spacing:1.564px;transform:scaleX(0.93);transform-origin:0.70px 0;">2019/12/13</div>
<div class="t" style="left:1069.90px;top:915px;font-size:14.5px;line-height:14.5px;color:#222;font-weight:400;letter-spacing:1.097px;transform:scaleX(0.93);transform-origin:0.70px 0;">Optimized</div>
<div class="t" style="left:263.90px;top:963px;font-size:14.5px;line-height:14.5px;color:#222;font-weight:400;letter-spacing:0.384px;transform:scaleX(0.93);transform-origin:0.50px 0;">06</div>
<div class="t" style="left:315.50px;top:963px;font-size:14.5px;line-height:14.5px;color:#222;font-weight:400;letter-spacing:1.146px;transform:scaleX(0.93);transform-origin:1.20px 0;">Demo 6</div>
<div class="t" style="left:481.00px;top:963px;font-size:14.5px;line-height:14.5px;color:#222;font-weight:400;letter-spacing:0.898px;transform:scaleX(0.93);transform-origin:1.20px 0;">Demo with dev</div>
<div class="t" style="left:683.80px;top:963px;font-size:14.5px;line-height:14.5px;color:#222;font-weight:400;letter-spacing:1.093px;transform:scaleX(0.93);transform-origin:1.20px 0;">Nov 2019</div>
<div class="t" style="left:814.50px;top:963px;font-size:14.5px;line-height:14.5px;color:#222;font-weight:400;letter-spacing:0.971px;transform:scaleX(0.93);transform-origin:1.20px 0;">Barbara Smith</div>
<div class="t" style="left:939.70px;top:963px;font-size:14.5px;line-height:14.5px;color:#222;font-weight:400;letter-spacing:1.643px;transform:scaleX(0.93);transform-origin:0.70px 0;">2019/12/6</div>
<div class="t" style="left:1069.50px;top:963px;font-size:14.5px;line-height:14.5px;color:#222;font-weight:400;letter-spacing:1.163px;transform:scaleX(0.93);transform-origin:1.10px 0;">Unsuccessful</div>
</body></html>
